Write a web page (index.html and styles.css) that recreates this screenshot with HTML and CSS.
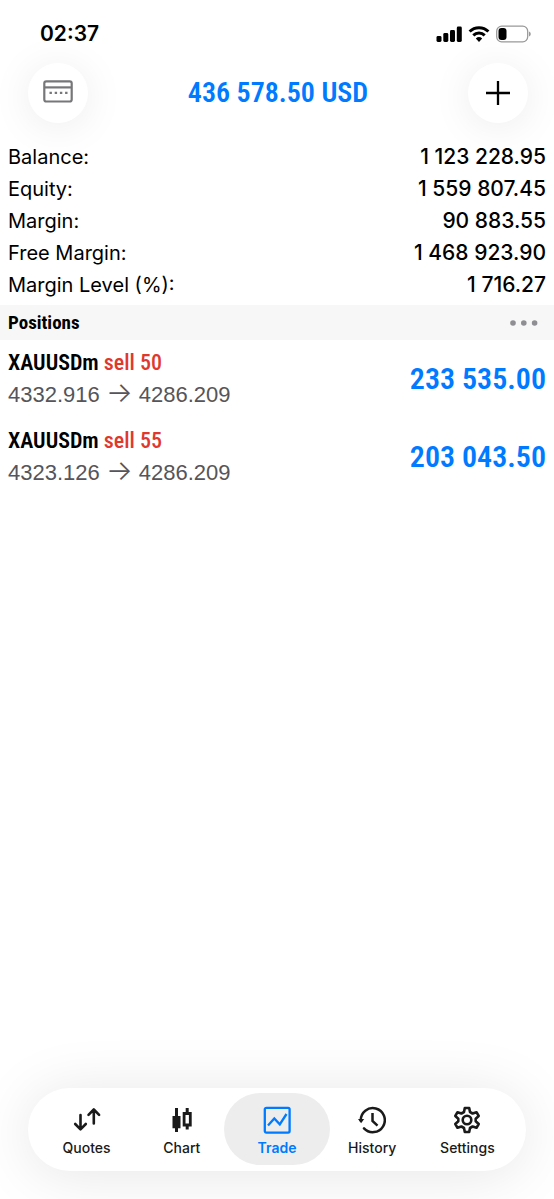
FILE: index.html
```html
<!DOCTYPE html>
<html lang="en">
<head>
<meta charset="utf-8">
<meta name="viewport" content="width=device-width, initial-scale=1">
<title>Trade</title>
<link rel="stylesheet" href="styles.css">
</head>
<body>
<div class="status">
  <time class="clock">02:37</time>
  <div class="indicators">
    <svg width="26" height="18" viewBox="0 0 26 18"><rect x="0.500" y="11" width="5" height="6" rx="1.4"/><rect x="7.300" y="8" width="5" height="9" rx="1.4"/><rect x="14" y="5" width="5" height="12" rx="1.4"/><rect x="20.800" y="1.500" width="5" height="15.500" rx="1.4"/></svg>
    <svg width="22" height="18" viewBox="0 0 22 18"><g fill="none" stroke="#000" stroke-width="3"><path d="M1.600 6.500a13.400 13.400 0 0 1 18.800 0"/><path d="M5.300 10.300a8.200 8.200 0 0 1 11.400 0"/></g><path d="M11 17 7.800 13.600a4.700 4.700 0 0 1 6.400 0z"/></svg>
    <svg width="36" height="18" viewBox="0 0 36 18"><rect x="0.700" y="1.200" width="31" height="15.600" rx="5" fill="none" stroke="#999" stroke-width="1.300"/><rect x="2.500" y="3" width="8" height="12" rx="3"/><path d="M33 6.500v5q1.800-.6 1.800-2.500T33 6.500z" fill="#999"/></svg>
  </div>
</div>
<header class="top">
  <button class="round" aria-label="Accounts">
    <svg width="30" height="26" viewBox="0 0 30 26" fill="none" stroke="#77777a" stroke-width="2.200"><rect x="1.300" y="1.300" width="27.400" height="20.200" rx="2"/><path d="M1.500 7.400h27"/><path d="M6.500 12.900h18" stroke-width="2.400" stroke-dasharray="2.400 2.800"/></svg>
  </button>
  <h1 class="profit">436 578.50 USD</h1>
  <button class="round" aria-label="New order">
    <svg width="26" height="26" viewBox="0 0 26 26" fill="none" stroke="#000" stroke-width="2.300"><path d="M13 1v24M1 13h24"/></svg>
  </button>
</header>
<main class="content">
  <dl class="account">
    <div class="line"><dt>Balance:</dt><dd>1 123 228.95</dd></div>
    <div class="line"><dt>Equity:</dt><dd>1 559 807.45</dd></div>
    <div class="line"><dt>Margin:</dt><dd>90 883.55</dd></div>
    <div class="line"><dt>Free Margin:</dt><dd>1 468 923.90</dd></div>
    <div class="line"><dt>Margin Level (%):</dt><dd>1 716.27</dd></div>
  </dl>
  <div class="section">
    <h2>Positions</h2>
    <button class="more" aria-label="More"><svg width="28" height="6" viewBox="0 0 28 6" fill="#8e8e93"><circle cx="3" cy="3" r="2.800"/><circle cx="13.800" cy="3" r="2.800"/><circle cx="24.600" cy="3" r="2.800"/></svg></button>
  </div>
  <ul class="positions">
    <li class="position">
      <div><p class="symbol">XAUUSDm <span class="sell">sell 50</span></p><p class="price">4332.916 <span class="arrow">→</span> 4286.209</p></div>
      <strong class="gain">233 535.00</strong>
    </li>
    <li class="position">
      <div><p class="symbol">XAUUSDm <span class="sell">sell 55</span></p><p class="price">4323.126 <span class="arrow">→</span> 4286.209</p></div>
      <strong class="gain">203 043.50</strong>
    </li>
  </ul>
</main>
<nav class="tabs">
  <a class="tab" href="#quotes"><svg width="28" height="28" viewBox="0 0 28 28" fill="none" stroke="currentColor" stroke-width="2.600" stroke-linecap="round" stroke-linejoin="round"><path d="M7.500 9v14M2.200 18 7.500 23.300l5.300-5.300M20.800 17.500V3.500M15.500 8.800l5.300-5.300 5.300 5.300"/></svg>Quotes</a>
  <a class="tab" href="#chart"><svg width="28" height="28" viewBox="0 0 28 28"><path d="M7 2h3v8h2.500v12.300H10V26H7v-3.700H4.500V10H7zM17.700 2h3v4h3v14.500h-3v3h-3v-3h-3V6h3z" fill="currentColor"/><path d="M17.500 9h3.400v8.500h-3.400z" fill="#fff"/></svg>Chart</a>
  <a class="tab active" href="#trade" aria-current="page"><svg width="28" height="28" viewBox="0 0 28 28" fill="none" stroke="currentColor" stroke-width="2.300"><rect x="1.800" y="1.800" width="24.800" height="24.800" rx="1.500"/><path d="m5 19.500 6.300-7 5.500 5.800L23.500 8"/></svg>Trade</a>
  <a class="tab" href="#history"><svg width="28" height="28" viewBox="0 0 28 28" fill="none" stroke="currentColor" stroke-width="2.500"><path d="M2.800 14.500A12 12 0 1 1 6 22.300" stroke-linecap="round"/><path d="M14.500 7v8l5 4.600"/><path d="M0 13h6.200l-3.100 4.300z" fill="currentColor" stroke="none"/></svg>History</a>
  <a class="tab" href="#settings"><svg width="28" height="28" viewBox="0 0 28 28" fill="none" stroke="currentColor" stroke-width="2.600" stroke-linejoin="round"><path d="M11.800 2h4.400l.8 4 2.600 1.500 3.900-1.300 2.200 3.800-3 2.700v2.600l3 2.700-2.200 3.800-3.900-1.300L17 22l-.8 4h-4.400l-.8-4-2.600-1.500-3.900 1.300L2.300 18l3-2.700v-2.600l-3-2.700 2.200-3.800 3.900 1.300L11 6z"/><circle cx="14" cy="14" r="4.300"/></svg>Settings</a>
</nav>
</body>
</html>
```

FILE: styles.css
```css
* { box-sizing: border-box; }
body {
  margin: 0;
  min-height: 100vh;
  display: flex;
  flex-direction: column;
  background: #fff;
  color: #000;
  font-family: Inter, "Liberation Sans", sans-serif;
  overflow-x: hidden;
}
h1, h2, p, dl, dd, ul { margin: 0; padding: 0; }
ul { list-style: none; }
button { border: 0; padding: 0; background: none; }
svg { display: block; flex: none; }

.status {
  display: flex;
  justify-content: space-between;
  align-items: center;
  padding: 20px 22px 0 40px;
  height: 47px;
}
.clock { font-size: 21px; font-weight: 600; line-height: 26px; }
.indicators { display: flex; align-items: center; gap: 6px; }

.top {
  display: flex;
  justify-content: space-between;
  align-items: center;
  height: 92px;
  padding: 0 26px 0 28px;
}
.round {
  display: grid;
  place-items: center;
  width: 60px;
  height: 60px;
  border-radius: 50%;
  background: #fff;
  box-shadow: 0 4px 40px rgba(0, 0, 0, 0.08);
}
.profit, .symbol, .gain, .section h2 {
  font-family: "Roboto Condensed", "Liberation Sans Narrow", "Open Sans Condensed", sans-serif;
}
.profit { color: #007aff; font-size: 28px; line-height: 36px; font-weight: 600; }

.content { flex: 1; }
.account { padding: 2px 8px 4px; }
.line {
  display: flex;
  justify-content: space-between;
  font-size: 21px;
  line-height: 32px;
}
.line dt { font-size: 20px; }
.line dd { font-weight: 500; }

.section {
  display: flex;
  justify-content: space-between;
  align-items: center;
  height: 35px;
  padding: 0 16px 0 8px;
  background: #f7f7f7;
}
.section h2 { font-size: 19px; line-height: 24px; font-weight: 700; }

.position {
  display: flex;
  justify-content: space-between;
  align-items: center;
  height: 78px;
  padding: 0 8px;
}
.symbol { font-size: 22px; line-height: 32px; font-weight: 600; }
.sell { color: #e0382e; font-weight: 500; }
.price {
  color: #55555a;
  font-family: "Liberation Sans", Arial, sans-serif;
  font-size: 22px;
  line-height: 32px;
}
.arrow { font-family: Inter, sans-serif; font-size: 28px; font-weight: 300; line-height: 24px; }
.gain { color: #007aff; font-size: 30px; line-height: 36px; font-weight: 600; }

.tabs {
  display: grid;
  grid-template-columns: repeat(5, 1fr);
  margin: 0 28px 28px;
  padding: 5px 11px 6px;
  border-radius: 42px;
  background: #fff;
  box-shadow: 0 4px 60px rgba(0, 0, 0, 0.1);
}
.tab {
  display: flex;
  flex-direction: column;
  align-items: center;
  gap: 5px;
  height: 72px;
  padding-top: 13px;
  border-radius: 36px;
  color: #1a1a1a;
  font-size: 14px;
  line-height: 18px;
  font-weight: 500;
  text-decoration: none;
}
.tab.active {
  margin: 0 -5px;
  background: #ededed;
  color: #007aff;
  font-weight: 600;
}
```
